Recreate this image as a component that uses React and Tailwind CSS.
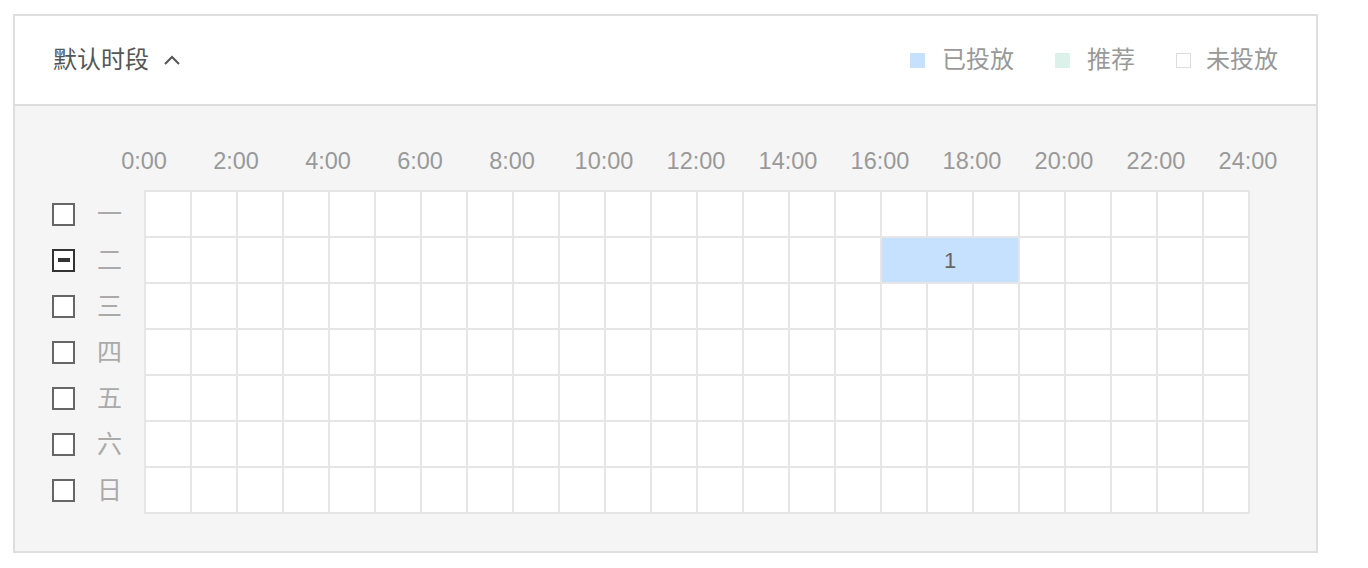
import React from "react";

const FONT = { fontFamily: '"Liberation Sans", "Noto Sans CJK SC", sans-serif' };

const days = ["一", "二", "三", "四", "五", "六", "日"];
const times = ["0:00", "2:00", "4:00", "6:00", "8:00", "10:00", "12:00", "14:00", "16:00", "18:00", "20:00", "22:00", "24:00"];

function Checkbox({ indeterminate }) {
  if (indeterminate) {
    return (
      <div className="w-[23px] h-[23px] border-2 border-[#333] bg-white flex items-center justify-center">
        <div className="w-[12px] h-[4px] bg-[#333]" />
      </div>
    );
  }
  return <div className="w-[23px] h-[23px] border-2 border-[#666] bg-white" />;
}

function Row({ idx }) {
  const cells = [];
  if (idx === 1) {
    for (let h = 0; h < 16; h++) cells.push(<div key={h} className="h-[44px] bg-white" />);
    cells.push(
      <div key="sel" className="col-span-3 h-[44px] bg-[#c5e1fd] flex items-center justify-center text-[22px] text-[#666]">
        1
      </div>
    );
    for (let h = 19; h < 24; h++) cells.push(<div key={h} className="h-[44px] bg-white" />);
  } else {
    for (let h = 0; h < 24; h++) cells.push(<div key={h} className="h-[44px] bg-white" />);
  }
  return cells;
}

export default function App() {
  return (
    <div className="bg-white w-[1368px] h-[568px] pt-[14px] pl-[13px]" style={FONT}>
      <div className="w-[1305px] border-2 border-[#dedede]">
        {/* Header */}
        <div className="h-[90px] bg-white border-b-2 border-[#dedede] flex items-center justify-between pl-[38px] pr-[38px]">
          <div className="flex items-center">
            <span className="text-[24px] text-[#555] leading-none">默认时段</span>
            <svg className="ml-[14px]" width="18" height="12" viewBox="0 0 18 12" fill="none">
              <path d="M2 10 L9 3 L16 10" stroke="#555" strokeWidth="2" />
            </svg>
          </div>
          <div className="flex items-center gap-[41px] text-[24px] text-[#999] leading-none">
            <div className="flex items-center gap-[17px]">
              <div className="w-[15px] h-[15px] bg-[#c5e1fd]" />
              <span>已投放</span>
            </div>
            <div className="flex items-center gap-[17px]">
              <div className="w-[15px] h-[15px] bg-[#dcf1ea]" />
              <span>推荐</span>
            </div>
            <div className="flex items-center gap-[15px]">
              <div className="w-[15px] h-[15px] border border-[#ddd] bg-white" />
              <span>未投放</span>
            </div>
          </div>
        </div>

        {/* Body */}
        <div className="bg-[#f5f5f5] pt-[42px] pb-[37px] pl-[37px]">
          <div className="flex pl-[46px] h-[28px] items-center">
            {times.map((t) => (
              <div key={t} className="w-[92px] shrink-0 text-center text-[23.5px] text-[#999] leading-none">
                {t}
              </div>
            ))}
          </div>
          <div className="flex mt-[14px]">
            <div className="w-[92px] flex flex-col gap-[2px] pt-[2px]">
              {days.map((d, i) => (
                <div key={d} className="h-[44px] flex items-center">
                  <Checkbox indeterminate={i === 1} />
                  <span className="ml-[22px] text-[25px] text-[#aaa] leading-none">{d}</span>
                </div>
              ))}
            </div>
            <div className="grid grid-cols-[repeat(24,44px)] gap-[2px] p-[2px] bg-[#e6e6e6]">
              {days.map((d, i) => (
                <Row key={d} idx={i} />
              ))}
            </div>
          </div>
        </div>
      </div>
    </div>
  );
}
